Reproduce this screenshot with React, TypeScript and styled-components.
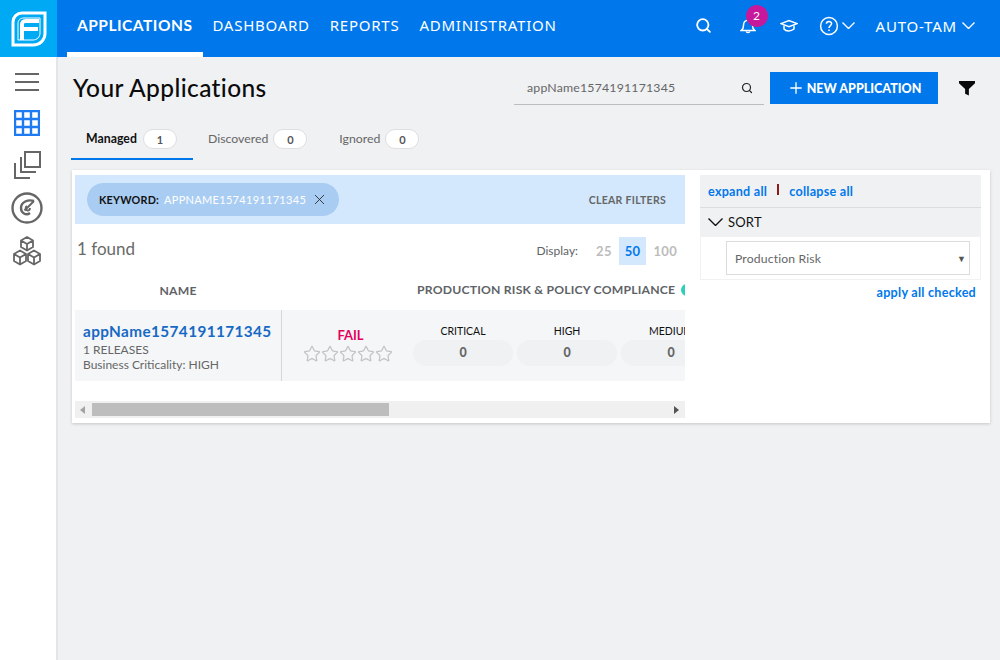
import React from 'react';
import styled, { createGlobalStyle } from 'styled-components';
import { Search, X, Plus, Star } from 'lucide-react';

const Global = createGlobalStyle`
  html, body { margin: 0; padding: 0; height: 100%; background: #f0f1f3; }
  body { font-family: Lato, "Open Sans", sans-serif; color: #5f6367; overflow: hidden; }
  * { box-sizing: border-box; }
`;

const Page = styled.div`
  width: 1000px;
  height: 660px;
  display: flex;
  flex-direction: column;
  overflow: hidden;
`;

const TopBar = styled.header`
  height: 57px;
  display: flex;
  background: #0078ec;
  color: #fff;
  flex: none;
`;

const LogoBox = styled.div`
  width: 57px;
  display: flex;
  align-items: center;
  justify-content: center;
  background: #00a9f4;
`;

const Nav = styled.nav`
  display: flex;
  margin-left: 10px;
`;

const NavItem = styled.div<{ $active?: boolean }>`
  display: flex;
  align-items: flex-start;
  padding: 16px ${(p) => (p.$active ? '11px' : '10px')} 0 10px;
  margin-right: ${(p) => (p.$active ? '-1px' : '0')};
  font-family: ${(p) => (p.$active ? 'Lato' : '"Noto Sans"')}, sans-serif;
  font-size: ${(p) => (p.$active ? '15.5px' : '15px')};
  font-weight: ${(p) => (p.$active ? 700 : 400)};
  letter-spacing: ${(p) => (p.$active ? '0.5px' : '0.75px')};
  line-height: 18px;
  border-bottom: 5px solid ${(p) => (p.$active ? '#fff' : 'transparent')};
`;

const TopRight = styled.div`
  margin-left: auto;
  display: flex;
  align-items: center;
  height: 51px;
  padding-right: 25px;
`;

const IconSlot = styled.div<{ $w: number }>`
  position: relative;
  width: ${(p) => p.$w}px;
  display: flex;
  align-items: center;
  gap: 3px;
`;

const Badge = styled.span`
  position: absolute;
  left: 6px;
  top: -12px;
  width: 22px;
  height: 22px;
  border-radius: 50%;
  background: #c7189b;
  font-size: 12px;
  line-height: 22px;
  text-align: center;
`;

const UserName = styled.span`
  font-family: "Noto Sans", sans-serif;
  font-size: 15px;
  letter-spacing: 0.8px;
  margin-right: 5px;
`;

const Body = styled.div`
  flex: 1;
  display: flex;
  min-height: 0;
`;

const SideBar = styled.aside`
  width: 58px;
  flex: none;
  background: #fff;
  border-right: 2px solid #e4e5e7;
  display: flex;
  flex-direction: column;
  padding: 3px 2px 0 0;
`;

const SideSlot = styled.div<{ $h?: number }>`
  height: ${(p) => p.$h ?? 43}px;
  display: flex;
  align-items: center;
  justify-content: center;
`;

const Main = styled.main`
  flex: 1;
  padding: 0 10px 0 14px;
  min-width: 0;
`;

const TitleRow = styled.div`
  height: 63px;
  display: flex;
  align-items: center;
  padding-bottom: 1px;
`;

const Title = styled.h1`
  margin: 0 0 2px 1px;
  font-size: 24.5px;
  font-weight: 500;
  color: #0b0b0b;
  letter-spacing: 0.38px;
`;

const SearchBox = styled.div`
  margin-left: auto;
  width: 250px;
  height: 33px;
  display: flex;
  align-items: center;
  justify-content: space-between;
  padding: 0 11px 0 13px;
  border-bottom: 1px solid #bdbdbd;
  font-size: 12.3px;
  letter-spacing: 0.2px;
  color: #666;
`;

const NewButton = styled.button`
  margin-left: 6px;
  width: 168px;
  height: 32px;
  padding: 0;
  border: 0;
  background: #0078ec;
  color: #fff;
  display: flex;
  align-items: center;
  justify-content: center;
  gap: 2px;
  font: 900 12.5px Lato, sans-serif;
`;

const FilterSlot = styled.div`
  width: 52px;
  padding-left: 21px;
  display: flex;
  align-items: center;
`;

const Tabs = styled.div`
  display: flex;
  height: 40px;
  margin-bottom: 10px;
  margin-left: -1px;
`;

const TabItem = styled.div<{ $active?: boolean }>`
  width: ${(p) => (p.$active ? '122px' : 'auto')};
  display: flex;
  align-items: flex-start;
  justify-content: center;
  gap: ${(p) => (p.$active ? '6px' : '5px')};
  padding: 11px ${(p) => (p.$active ? '1px' : '0')} 0 0;
  margin-right: ${(p) => (p.$active ? '15px' : '32px')};
  font-size: 12.3px;
  font-weight: ${(p) => (p.$active ? 700 : 400)};
  color: ${(p) => (p.$active ? '#111' : '#666')};
  border-bottom: 2px solid ${(p) => (p.$active ? '#0078ec' : 'transparent')};
`;

const Count = styled.span`
  width: 34px;
  height: 20px;
  margin-top: -2px;
  border: 1px solid #dddfe1;
  border-radius: 10px;
  background: #fff;
  font-size: 11px;
  font-weight: 700;
  line-height: 19px;
  text-align: center;
  color: #555;
`;

const Panel = styled.section`
  height: 253px;
  background: #fff;
  box-shadow: 0 1px 3px rgba(0, 0, 0, 0.18);
  display: flex;
  padding: 5px 9px 0 3px;
`;

const Results = styled.div`
  width: 610px;
  flex: none;
  overflow: hidden;
`;

const FilterBar = styled.div`
  height: 49px;
  background: #d3e8fd;
  display: flex;
  align-items: center;
  justify-content: space-between;
  padding: 0 19px 0 12px;
`;

const Chip = styled.div`
  height: 33px;
  padding: 0 11px 0 12px;
  border-radius: 17px;
  background: #a9cdf2;
  display: flex;
  align-items: center;
  gap: 5px;
  font-size: 11px;
`;

const ChipKey = styled.b`
  color: #111;
  font-size: 10.8px;
  font-weight: 700;
  letter-spacing: 0.2px;
`;

const ChipValue = styled.span`
  color: #fff;
  letter-spacing: 0.3px;
`;

const ClearFilters = styled.span`
  font-size: 10.5px;
  font-weight: 700;
  letter-spacing: 0.3px;
  color: #666;
`;

const FoundRow = styled.div`
  height: 50px;
  display: flex;
  align-items: center;
  padding: 0 1px 1px 2px;
  justify-content: space-between;
`;

const Found = styled.span`
  font-size: 17px;
  color: #6a6a6a;
`;

const DisplayBox = styled.div`
  display: flex;
  align-items: center;
  font-size: 12px;
  margin-top: 4px;
`;

const DisplayLabel = styled.span`
  margin-right: 11px;
`;

const PageSize = styled.span<{ $active?: boolean }>`
  padding: 0 ${(p) => (p.$active ? '6px' : '7px')};
  height: 28px;
  line-height: 29px;
  font-size: 13px;
  font-weight: 700;
  letter-spacing: 0.3px;
  color: ${(p) => (p.$active ? '#0078ec' : '#bcbcbc')};
  background: ${(p) => (p.$active ? '#d3e8fd' : 'transparent')};
`;

const HeadRow = styled.div`
  height: 36px;
  display: flex;
  align-items: center;
  padding-bottom: 3px;
  font-size: 12.2px;
  font-weight: 700;
  letter-spacing: 0.2px;
  color: #5f6367;
  white-space: nowrap;
`;

const NameHead = styled.div`
  width: 206px;
  flex: none;
  text-align: center;
`;

const RiskHead = styled.div`
  margin-left: 136px;
  flex: none;
  display: flex;
  align-items: center;
  gap: 6px;
  margin-top: -2px;
`;

const InfoDot = styled.span`
  width: 12px;
  height: 12px;
  flex: none;
  border-radius: 50%;
  background: #2fcfb8;
`;

const AppRow = styled.div`
  height: 71px;
  width: 720px;
  display: flex;
  background: #f4f6f8;
`;

const NameCell = styled.div`
  width: 207px;
  flex: none;
  border-right: 1px solid #d4d6d8;
  padding: 11px 0 0 8px;
`;

const AppName = styled.div`
  font-size: 15.3px;
  font-weight: 700;
  color: #1769c4;
  line-height: 20px;
  letter-spacing: 0.4px;
  margin-bottom: 2px;
`;

const AppMeta = styled.div`
  font-size: 12px;
  line-height: 14.5px;
  color: #666;
`;

const ScoreCell = styled.div`
  width: 131px;
  flex: none;
  display: flex;
  flex-direction: column;
  align-items: center;
  padding-top: 18px;
`;

const FailLabel = styled.div`
  font-size: 13px;
  font-weight: 700;
  color: #e5005b;
  line-height: 14px;
  padding-left: 6px;
`;

const Stars = styled.div`
  display: flex;
  margin-top: 3px;
`;

const Severities = styled.div`
  display: flex;
  gap: 4px;
`;

const Severity = styled.div`
  width: 100px;
  padding-top: 15px;
  text-align: center;
  font-size: 10.5px;
  color: #111;
`;

const SeverityValue = styled.div`
  height: 26px;
  margin-top: 3px;
  border-radius: 13px;
  background: #f0f1f3;
  font-size: 12.5px;
  font-weight: 900;
  line-height: 26px;
  color: #666;
`;

const ScrollBar = styled.div`
  height: 17px;
  margin-top: 20px;
  background: #f0f0f0;
  display: flex;
  align-items: center;
`;

const Arrow = styled.span<{ $right?: boolean }>`
  width: 0;
  height: 0;
  margin: ${(p) => (p.$right ? '0 6px 0 auto' : '0 7px 0 5px')};
  border-top: 4px solid transparent;
  border-bottom: 4px solid transparent;
  border-left: ${(p) => (p.$right ? '5px solid #555' : '0')};
  border-right: ${(p) => (p.$right ? '0' : '5px solid #a3a3a3')};
`;

const Thumb = styled.div`
  width: 297px;
  height: 13px;
  background: #bdbdbd;
`;

const Filters = styled.aside`
  width: 281px;
  flex: none;
  margin-left: 15px;
`;

const ExpandRow = styled.div`
  height: 33px;
  background: #f0f1f3;
  border-bottom: 1px solid #dcdddf;
  display: flex;
  align-items: center;
  padding: 0 8px;
  font-size: 12.6px;
  font-weight: 700;
  color: #0078ec;
  letter-spacing: 0.25px;
`;

const Divider = styled.span`
  width: 2px;
  height: 11px;
  margin: -3px 10px 0;
  background: #8b1a1a;
`;

const SortHead = styled.div`
  height: 29px;
  background: #f0f1f3;
  display: flex;
  align-items: center;
  gap: 5px;
  padding: 0 8px 1px;
  font-size: 13px;
  color: #111;
  letter-spacing: 0.2px;
`;

const SortBody = styled.div`
  height: 43px;
  border: 1px solid #f0f1f3;
  border-top: 0;
  padding: 4px 10px 0 25px;
`;

const SelectBox = styled.div`
  height: 34px;
  border: 1px solid #dcdcdc;
  display: flex;
  align-items: center;
  justify-content: space-between;
  padding: 0 3px 0 8px;
  font-size: 12.2px;
  letter-spacing: 0.15px;
  color: #666;
`;

const Caret = styled.span`
  font-size: 9px;
  color: #555;
`;

const ApplyAll = styled.div`
  margin-top: 5px;
  padding-right: 5px;
  text-align: right;
  font-size: 12.6px;
  font-weight: 700;
  color: #0078ec;
  letter-spacing: 0.25px;
`;

const LogoIcon = () => (
  <svg width="36" height="36" viewBox="0 0 36 36" fill="none" stroke="#fff">
    <path d="M11 2H34V22C34 29 29 34 22 34H2V11C2 6 6 2 11 2Z" strokeWidth="3" />
    <path d="M13 7H29V22C29 26 26 29 22 29H7V13C7 9 9 7 13 7Z" strokeWidth="1" />
    <path d="M11 29V14C11 11 12 10 15 10H28M11 18H27" strokeWidth="4" />
  </svg>
);

const Chevron = ({ w, color = '#fff' }: { w: number; color?: string }) => (
  <svg width={w} height={w / 2 + 1} viewBox={`0 0 ${w} ${w / 2 + 1}`} fill="none" stroke={color} strokeWidth="1.4">
    <path d={`M0.5 0.5L${w / 2} ${w / 2}L${w - 0.5} 0.5`} />
  </svg>
);

const BellIcon = () => (
  <svg width="16" height="17" viewBox="0 0 18 18" fill="none" stroke="#fff" strokeWidth="1.7">
    <path d="M1.5 14.5C3.5 13 4 11.5 4 8.5C4 5 6 3 9 3C12 3 14 5 14 8.5C14 11.5 14.5 13 16.5 14.5Z" />
    <path d="M7 15.5C7.3 17.3 10.7 17.3 11 15.5" />
  </svg>
);

const CapIcon = () => (
  <svg width="18" height="14" viewBox="0 0 18 14" fill="none" stroke="#fff" strokeWidth="1.5">
    <path d="M1 4.6L9 1.5L17 4.6L9 7.8Z" />
    <path d="M4 6.4V10C6 12.6 11 12.6 14 10V6.4" />
  </svg>
);

const HelpIcon = () => (
  <svg width="20" height="20" viewBox="0 0 20 20" fill="none" stroke="#fff" strokeWidth="1.5">
    <circle cx="10" cy="10" r="8.4" />
    <path d="M7.4 7.8C7.5 4.8 12.6 4.8 12.6 7.6C12.6 9.6 10 9.6 10 12" />
    <path d="M10 13.4V15" />
  </svg>
);

const FunnelIcon = () => (
  <svg width="16" height="16" viewBox="0 0 17 16">
    <path d="M0 0.5H17V3L10.5 9V16L6.5 14V9L0 3Z" fill="#0a0a0a" />
  </svg>
);

const MenuIcon = () => (
  <svg width="26" height="20" viewBox="0 0 26 20" stroke="#666" strokeWidth="2">
    <path d="M1 2H25M1 10H25M1 18H25" />
  </svg>
);

const GridIcon = () => (
  <svg width="26" height="26" viewBox="0 0 26 26" fill="none" stroke="#1f7bf2" strokeWidth="2.4">
    <path d="M1 1H25V25H1ZM9 1V25M17 1V25M1 9H25M1 17H25" />
  </svg>
);

const LayersIcon = () => (
  <svg width="28" height="28" viewBox="0 0 28 28" fill="none" stroke="#666" strokeWidth="2">
    <path d="M12 1H27V16H12Z" />
    <path d="M8 6V21H23" />
    <path d="M2 12V27H17" />
  </svg>
);

const GaugeIcon = () => (
  <svg width="32" height="32" viewBox="0 0 32 32" fill="none" stroke="#666" strokeWidth="2.4">
    <circle cx="16" cy="16" r="14.5" />
    <path d="M23 9C17 7 10 10 10 16C10 21 15 24 19 21" />
    <path d="M13.5 18.5L23 9" strokeWidth="2" />
    <path d="M16 14C14 15 14 18 16.5 18.5C18 18.5 19 17.5 19 16" strokeWidth="1.8" />
  </svg>
);

const CubesIcon = () => (
  <svg width="30" height="30" viewBox="0 0 30 30" fill="none" stroke="#666" strokeWidth="1.8" strokeLinejoin="round">
    <path d="M15 1L21 4.5V11L15 14.5L9 11V4.5ZM9 4.5L15 8L21 4.5M15 8V14.5" />
    <path d="M8 14.5L14 18V25L8 28.5L2 25V18ZM2 18L8 21.5L14 18M8 21.5V28.5" />
    <path d="M22 14.5L28 18V25L22 28.5L16 25V18ZM16 18L22 21.5L28 18M22 21.5V28.5" />
  </svg>
);

const severities = ['CRITICAL', 'HIGH', 'MEDIUM'];

const App = () => {
  return (
    <Page>
      <Global />
      <TopBar>
        <LogoBox>
          <LogoIcon />
        </LogoBox>
        <Nav>
          <NavItem $active>APPLICATIONS</NavItem>
          <NavItem>DASHBOARD</NavItem>
          <NavItem>REPORTS</NavItem>
          <NavItem>ADMINISTRATION</NavItem>
        </Nav>
        <TopRight>
          <IconSlot $w={45}>
            <Search size={17} strokeWidth={2.6} />
          </IconSlot>
          <IconSlot $w={40}>
            <BellIcon />
            <Badge>2</Badge>
          </IconSlot>
          <IconSlot $w={39}>
            <CapIcon />
          </IconSlot>
          <IconSlot $w={57}>
            <HelpIcon />
            <Chevron w={13} />
          </IconSlot>
          <UserName>AUTO-TAM</UserName>
          <Chevron w={13} />
        </TopRight>
      </TopBar>
      <Body>
        <SideBar>
          <SideSlot>
            <MenuIcon />
          </SideSlot>
          <SideSlot $h={40}>
            <GridIcon />
          </SideSlot>
          <SideSlot>
            <LayersIcon />
          </SideSlot>
          <SideSlot>
            <GaugeIcon />
          </SideSlot>
          <SideSlot>
            <CubesIcon />
          </SideSlot>
        </SideBar>
        <Main>
          <TitleRow>
            <Title>Your Applications</Title>
            <SearchBox>
              appName1574191171345
              <Search size={12} strokeWidth={2.4} color="#222" />
            </SearchBox>
            <NewButton>
              <Plus size={18} strokeWidth={1.8} />
              NEW APPLICATION
            </NewButton>
            <FilterSlot>
              <FunnelIcon />
            </FilterSlot>
          </TitleRow>
          <Tabs>
            <TabItem $active>
              Managed <Count>1</Count>
            </TabItem>
            <TabItem>
              Discovered <Count>0</Count>
            </TabItem>
            <TabItem>
              Ignored <Count>0</Count>
            </TabItem>
          </Tabs>
          <Panel>
            <Results>
              <FilterBar>
                <Chip>
                  <ChipKey>KEYWORD:</ChipKey>
                  <ChipValue>APPNAME1574191171345</ChipValue>
                  <X size={17} strokeWidth={1.2} color="#222" />
                </Chip>
                <ClearFilters>CLEAR FILTERS</ClearFilters>
              </FilterBar>
              <FoundRow>
                <Found>1 found</Found>
                <DisplayBox>
                  <DisplayLabel>Display:</DisplayLabel>
                  <PageSize>25</PageSize>
                  <PageSize $active>50</PageSize>
                  <PageSize>100</PageSize>
                </DisplayBox>
              </FoundRow>
              <HeadRow>
                <NameHead>NAME</NameHead>
                <RiskHead>
                  PRODUCTION RISK &amp; POLICY COMPLIANCE
                  <InfoDot />
                </RiskHead>
              </HeadRow>
              <AppRow>
                <NameCell>
                  <AppName>appName1574191171345</AppName>
                  <AppMeta>1 RELEASES</AppMeta>
                  <AppMeta>Business Criticality: HIGH</AppMeta>
                </NameCell>
                <ScoreCell>
                  <FailLabel>FAIL</FailLabel>
                  <Stars>
                    {[0, 1, 2, 3, 4].map((i) => (
                      <Star key={i} size={18} strokeWidth={1.7} color="#c4c4c4" />
                    ))}
                  </Stars>
                </ScoreCell>
                <Severities>
                  {severities.map((s) => (
                    <Severity key={s}>
                      {s}
                      <SeverityValue>0</SeverityValue>
                    </Severity>
                  ))}
                </Severities>
              </AppRow>
              <ScrollBar>
                <Arrow />
                <Thumb />
                <Arrow $right />
              </ScrollBar>
            </Results>
            <Filters>
              <ExpandRow>
                expand all
                <Divider />
                collapse all
              </ExpandRow>
              <SortHead>
                <Chevron w={15} color="#111" />
                SORT
              </SortHead>
              <SortBody>
                <SelectBox>
                  Production Risk
                  <Caret>▼</Caret>
                </SelectBox>
              </SortBody>
              <ApplyAll>apply all checked</ApplyAll>
            </Filters>
          </Panel>
        </Main>
      </Body>
    </Page>
  );
};

export default App;
